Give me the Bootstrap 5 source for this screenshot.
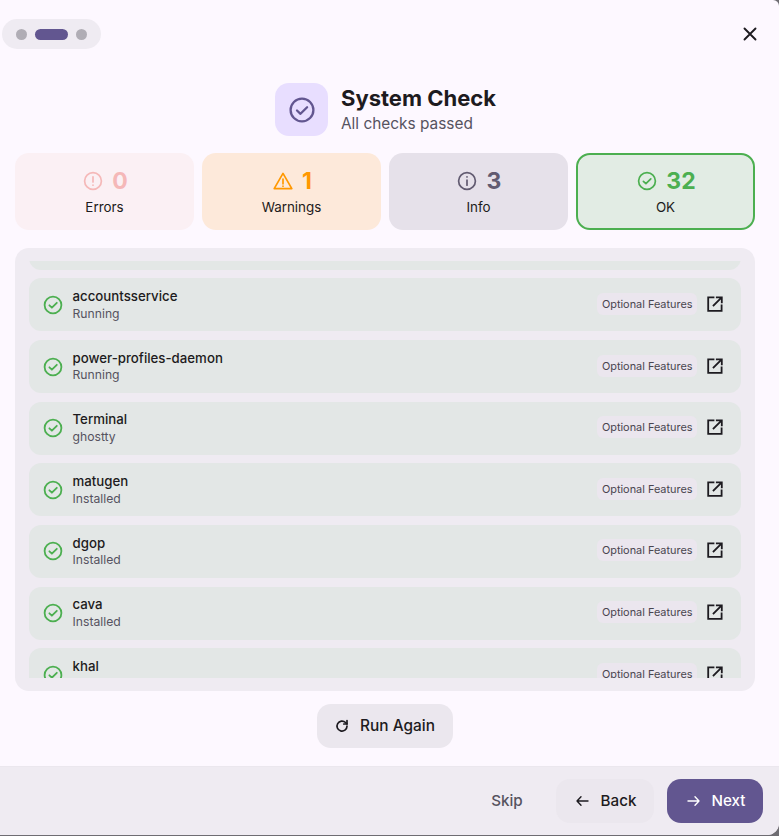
<!DOCTYPE html>
<html lang="en">
<head>
<meta charset="utf-8">
<title>System Check</title>
<link rel="stylesheet" href="https://cdn.jsdelivr.net/npm/bootstrap@5.3.0/dist/css/bootstrap.min.css">
<style>
html,body{height:836px;overflow:hidden;background:#6e6c72;}
body{font-family:Inter,"Noto Sans",sans-serif;color:#1d1b20;}
.shell{width:779px;height:835px;background:#fdf8ff;border-radius:0 6px 12px 0;overflow:hidden;}
.topbar{height:68px;padding:19px 17px 0 2px;}
.stepper{width:99px;height:30px;background:#efebf2;border-radius:15px;}
.dot-step{width:11px;height:11px;border-radius:50%;background:#b0adb5;}
.dot-active{width:33px;height:11px;border-radius:6px;background:#625690;}
.closer{width:24px;height:24px;margin-top:3px;}
.heading{height:85px;padding:15px 8px 0 0;}
.hero-icon{width:53px;height:53px;border-radius:14px;background:#e8deff;margin-right:5px;}
.title-main{font-size:22px;font-weight:700;line-height:30px;color:#1d1b20;}
.title-sub{font-size:15.4px;line-height:20px;margin-top:1px;color:#56535f;}
.stats{padding:0 24px 0 15px;height:77px;}
.stat{width:179px;height:77px;border-radius:14px;padding-top:13px;}
.stat-err{background:#fbf0f4;}
.stat-warn{background:#fde9da;}
.stat-info{background:#e6e1ea;}
.stat-ok{background:#e2ece4;border:2px solid #4caf50;padding-top:11px;}
.stat-head{gap:9.5px;padding-left:1.5px;}
.stat-num{font-size:23px;font-weight:700;line-height:30px;}
.stat-label{font-size:13.4px;line-height:20px;margin-top:1px;color:#1d1b20;}
.c-err{color:#f5b8b8;}.c-warn{color:#ff9800;}.c-info{color:#625b71;}.c-ok{color:#4caf50;}
.panel{margin:18px 24px 0 15px;height:443px;border-radius:14px;background:#efebf2;padding:13px 14px;}
.scroller{height:417px;overflow:hidden;}
.check-list{margin-top:-44.3px;}
.check-row{height:53px;margin-bottom:8.67px;background:#e3e7e6;border-radius:12px;padding:0 18px 0 14px;}
.check-icon{margin-right:9.5px;}
.check-name{font-size:13.25px;font-weight:500;line-height:17px;color:#1d1b20;}
.check-state{font-size:12.2px;line-height:16px;margin-top:.5px;color:#56535f;}
.tag{font-size:10.9px;line-height:22px;height:22px;padding:0 4.5px;border-radius:6px;background:#ebe6ee;color:#49454f;margin:0 10px 2px 0;}
.ext-icon{margin-bottom:2px;}
.again{margin-top:13px;height:44px;padding-right:10px;}
.btn-again{width:136px;height:44px;border-radius:14px;background:#ebe7ee;border:0;font-size:15.4px;font-weight:500;color:#1d1b20;padding:0;}
.spin-icon{margin-right:2px;}
.bottom{margin-top:18px;height:70px;background:#efebf2;border-top:1px solid #ebe7ee;padding:12px 16px 0 0;}
.btn-foot{height:44px;border-radius:14px;border:0;font-size:15.2px;font-weight:500;padding:0;gap:11px;}
.btn-skip{background:transparent;color:#56535f;width:64px;margin-right:17px;}
.btn-back{background:#ebe7ee;color:#1d1b20;width:98px;margin-right:13px;}
.btn-next{background:#625690;color:#fff;width:96px;}
.btn-foot:hover,.btn-again:hover{color:inherit;}
</style>
</head>
<body>
<div class="shell">
  <div class="topbar d-flex justify-content-between align-items-start">
    <div class="stepper d-flex align-items-center justify-content-center gap-2">
      <span class="dot-step"></span><span class="dot-active"></span><span class="dot-step"></span>
    </div>
    <svg class="closer" viewBox="0 0 24 24" fill="none" stroke="#1d1b20" stroke-width="1.9" stroke-linecap="round" aria-label="Close"><path d="M6.5 6.5l11 11M17.5 6.5l-11 11"/></svg>
  </div>

  <div class="heading d-flex justify-content-center align-items-start gap-2">
    <div class="hero-icon d-flex align-items-center justify-content-center">
      <svg width="28" height="28" viewBox="0 0 28 28" fill="none" stroke="#625690" stroke-width="2.3" stroke-linecap="round" stroke-linejoin="round"><circle cx="14" cy="14" r="11.4"/><path d="M9 14.5l3.5 3.3 6.6-6.6"/></svg>
    </div>
    <div>
      <div class="title-main">System Check</div>
      <div class="title-sub">All checks passed</div>
    </div>
  </div>

  <div class="stats d-flex gap-2">
    <div class="stat stat-err text-center">
      <div class="stat-head d-flex justify-content-center align-items-center c-err">
        <svg width="20" height="20" viewBox="0 0 20 20" fill="none" stroke="currentColor" stroke-width="1.7" stroke-linecap="round"><circle cx="10" cy="10" r="8.4"/><path d="M10 5.8v5.2M10 14v.2"/></svg>
        <span class="stat-num">0</span>
      </div>
      <div class="stat-label">Errors</div>
    </div>
    <div class="stat stat-warn text-center">
      <div class="stat-head d-flex justify-content-center align-items-center c-warn">
        <svg width="20" height="20" viewBox="0 0 20 20" fill="none" stroke="currentColor" stroke-width="1.7" stroke-linecap="round" stroke-linejoin="round"><path d="M10 2.4L18.8 17.6H1.2z"/><path d="M10 8v4.8M10 15v.2"/></svg>
        <span class="stat-num">1</span>
      </div>
      <div class="stat-label">Warnings</div>
    </div>
    <div class="stat stat-info text-center">
      <div class="stat-head d-flex justify-content-center align-items-center c-info">
        <svg width="20" height="20" viewBox="0 0 20 20" fill="none" stroke="currentColor" stroke-width="1.7" stroke-linecap="round"><circle cx="10" cy="10" r="8.4"/><path d="M10 9.2v5M10 5.8v.2"/></svg>
        <span class="stat-num">3</span>
      </div>
      <div class="stat-label">Info</div>
    </div>
    <div class="stat stat-ok text-center">
      <div class="stat-head d-flex justify-content-center align-items-center c-ok">
        <svg width="20" height="20" viewBox="0 0 20 20" fill="none" stroke="currentColor" stroke-width="1.7" stroke-linecap="round" stroke-linejoin="round"><circle cx="10" cy="10" r="8.4"/><path d="M6.4 10.3l2.5 2.4 4.9-4.9"/></svg>
        <span class="stat-num">32</span>
      </div>
      <div class="stat-label">OK</div>
    </div>
  </div>

  <div class="panel">
    <div class="scroller">
      <div class="check-list" id="list"></div>
    </div>
  </div>

  <div class="again d-flex justify-content-center">
    <button class="btn btn-again d-inline-flex align-items-center justify-content-center gap-2">
      <svg class="spin-icon" width="16" height="16" viewBox="0 0 16 16" fill="none" stroke="#1d1b20" stroke-width="1.7" stroke-linecap="round" stroke-linejoin="round"><path d="M13 8.2a5 5 0 1 1-1.5-3.7L13 6"/><path d="M13 2.6V6H9.8"/></svg>
      Run Again
    </button>
  </div>

  <div class="bottom d-flex justify-content-end">
    <button class="btn btn-foot btn-skip">Skip</button>
    <button class="btn btn-foot btn-back d-inline-flex align-items-center justify-content-center">
      <svg width="16" height="16" viewBox="0 0 16 16" fill="none" stroke="#1d1b20" stroke-width="1.4" stroke-linecap="round" stroke-linejoin="round"><path d="M14 8H3M7 3.8L3 8l4 4.2"/></svg>
      Back
    </button>
    <button class="btn btn-foot btn-next d-inline-flex align-items-center justify-content-center">
      <svg width="16" height="16" viewBox="0 0 16 16" fill="none" stroke="#fff" stroke-width="1.4" stroke-linecap="round" stroke-linejoin="round"><path d="M3 8h11M10 3.8L14 8l-4 4.2"/></svg>
      Next
    </button>
  </div>
</div>
<script>
var rows=[["accountsservice","Running"],["power-profiles-daemon","Running"],["Terminal","ghostty"],["matugen","Installed"],["dgop","Installed"],["cava","Installed"],["khal","&nbsp;"]];
document.getElementById("list").innerHTML='<div class="check-row"></div>'+rows.map(function(r){
 return '<div class="check-row d-flex align-items-center">'+
 '<svg class="check-icon flex-shrink-0" width="20" height="20" viewBox="0 0 20 20" fill="none" stroke="#4caf50" stroke-width="1.8" stroke-linecap="round" stroke-linejoin="round"><circle cx="10" cy="10" r="8.4"/><path d="M6.4 10.3l2.5 2.4 4.9-4.9"/></svg>'+
 '<div class="flex-grow-1"><div class="check-name">'+r[0]+'</div><div class="check-state">'+r[1]+'</div></div>'+
 '<span class="tag">Optional Features</span>'+
 '<svg class="ext-icon" width="16" height="16" viewBox="0 0 16 16" fill="none" stroke="#1d1b20" stroke-width="1.8" stroke-linecap="square"><path d="M6.5 1.4H1.2v13.4h13.4V9.5"/><path d="M6.6 9.4L14.2 1.8M9.8 1.3h5v5" stroke-linejoin="miter"/></svg>'+
 '</div>';
}).join("");
</script>
<script src="https://cdn.jsdelivr.net/npm/bootstrap@5.3.0/dist/js/bootstrap.bundle.min.js"></script>
</body>
</html>
